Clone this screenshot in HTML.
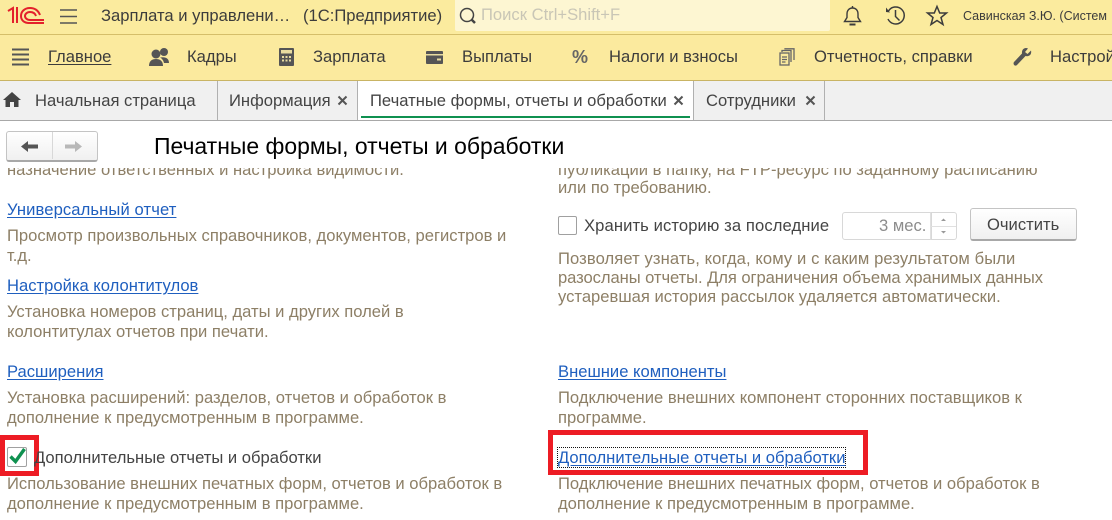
<!DOCTYPE html>
<html lang="ru"><head><meta charset="utf-8"><title>Печатные формы, отчеты и обработки</title>
<style>
html,body{margin:0;padding:0;background:#fff}
#p{position:relative;width:1112px;height:520px;overflow:hidden;background:#fff;font-family:"Liberation Sans",Arial,sans-serif;font-size:16.6px;color:#333}
.a{position:absolute}
.t{position:absolute;white-space:nowrap;line-height:20px}
.g{color:#8d7f66}
.l{color:#1f5fbf;text-decoration:underline;text-underline-offset:2px}
svg{position:absolute;overflow:visible}
.x{position:absolute;width:9px;height:9px}
</style></head><body><div id="p">
<div class="a" style="left:0;top:0;width:1112px;height:34px;background:#fbeb9e;border-bottom:1px solid #d5be6a"></div>
<div class="a" style="left:0;top:35px;width:1112px;height:45px;background:#fbea9e;border-bottom:1px solid #c9b464"></div>
<div class="a" style="left:0;top:81px;width:1112px;height:39px;background:#f0f0f0;border-bottom:1px solid #a8a8a8"></div>

<svg style="left:7px;top:5px" width="36" height="20" viewBox="0 0 36 20" fill="none" stroke="#e3202c" stroke-width="2"><path d="M1 6L6 3V18M10 2V18"/><path d="M33 10C31 5 27 3 23 3C17 3 14 7 14 11C14 15 17 18 22 18" /><path d="M29 11C28 8 26 7 23 7C20 7 18 9 18 11C18 13 20 15 23 15H37"/><path d="M21 18H37"/></svg>
<svg style="left:60px;top:9px" width="18" height="15" fill="none" stroke="#555" stroke-width="1.5"><path d="M0 1H17M0 7.500H17M0 14H17"/></svg>
<div class="t" style="left:101px;top:6px;color:#3c3c3c">Зарплата и управлени…</div>
<div class="t" style="left:303px;top:6px;color:#3c3c3c">(1С:Предприятие)</div>

<div class="a" style="left:455px;top:0;width:375px;height:31px;background:#fdf6d2;border-radius:0 0 2px 2px"></div>
<svg style="left:458px;top:6px" width="20" height="20" fill="none" stroke="#444" stroke-width="1.5"><circle cx="9" cy="9" r="6.500"/><path d="M13.500 13.500L17 17" stroke-width="2.500"/></svg>
<div class="t" style="left:481px;top:5px;color:#c9c6b6">Поиск Ctrl+Shift+F</div>

<svg style="left:843px;top:5px" width="20" height="22" fill="none" stroke="#3c3c3c" stroke-width="1.400"><path d="M1.500 16.500H17.500L15 12.500V9C15 5.500 13 3 9.500 3C6 3 4 5.500 4 9V12.500Z"/><path d="M9.500 3V1"/><path d="M6.500 19.500H12.500" stroke-width="2"/></svg>
<svg style="left:885px;top:5px" width="22" height="22" fill="none" stroke="#3c3c3c" stroke-width="1.500"><path d="M3.500 6A8.500 8.500 0 1 1 3 14"/><path d="M1 4.500L5 9.500L1 9Z" fill="#3c3c3c" stroke="none" transform="translate(0,-2)"/><path d="M10.500 5V11.500L14.500 15.500"/></svg>
<svg style="left:926px;top:5px" width="22" height="22" fill="none" stroke="#3c3c3c" stroke-width="1.500"><path d="M11 1.500L13.700 8H20.500L15 12.500L17 19.500L11 15.500L5 19.500L7 12.500L1.500 8H8.300Z"/></svg>
<div class="t" style="left:963px;top:6px;font-size:12.500px;color:#3c3c3c">Савинская З.Ю. (Систем</div>

<svg style="left:12px;top:48px" width="18" height="18" fill="none" stroke="#555" stroke-width="2"><path d="M0 1.500H17M0 6.500H17M0 11.500H17M0 16.500H17"/></svg>
<div class="t" style="left:48px;top:47px;color:#3c3c3c;text-decoration:underline;text-underline-offset:2px">Главное</div>
<svg style="left:149px;top:47px" width="22" height="20" fill="#555"><circle cx="7" cy="7" r="4.500"/><circle cx="15" cy="5" r="4"/><path d="M0 19C0 14 3 12 7 12C11 12 14 14 14 19Z"/><path d="M11 10.500C16 9.500 20 11 20 16H15C14.500 13.500 13 11.500 11 10.500Z"/></svg>
<div class="t" style="left:187px;top:47px;color:#3c3c3c">Кадры</div>
<svg style="left:279px;top:48px" width="15" height="18"><rect width="15" height="18" rx="1" fill="#555"/><rect x="2" y="2" width="11" height="3.500" fill="#e8dca0"/><path d="M3 8H5V10H3ZM6.500 8H8.500V10H6.500ZM10 8H12V10H10ZM3 11.500H5V13.500H3ZM6.500 11.500H8.500V13.500H6.500ZM10 11.500H12V13.500H10Z" fill="#e8dca0"/></svg>
<div class="t" style="left:313px;top:47px;color:#3c3c3c">Зарплата</div>
<svg style="left:426px;top:51px" width="17" height="13"><rect width="17" height="13" rx="1" fill="#555"/><rect x="0" y="3" width="17" height="1.500" fill="#e8dca0"/><rect x="11" y="7.500" width="4" height="2" fill="#e8dca0"/></svg>
<div class="t" style="left:462px;top:47px;color:#3c3c3c">Выплаты</div>
<div class="t" style="left:572px;top:47px;font-weight:bold;font-size:18px;color:#666">%</div>
<div class="t" style="left:609px;top:47px;color:#3c3c3c">Налоги и взносы</div>
<svg style="left:779px;top:48px" width="16" height="18" fill="none" stroke="#666" stroke-width="1.300"><rect x="1" y="5" width="9" height="12" fill="#fbea9e"/><path d="M3 4V2.500H12V14M6 1.500V0.800H15V12"/><path d="M3 9H8M3 11.500H8M3 14H6.500"/></svg>
<div class="t" style="left:814px;top:47px;color:#3c3c3c">Отчетность, справки</div>
<svg style="left:1013px;top:47px" width="19" height="20" fill="#555"><path d="M18 3.500L14.500 7L12 5L15 1.500C11.500 0 8.500 2.500 9 6.500L1 15C-0.500 17 2 20 4 18L12.500 9C16 10 19 7.500 18 3.500Z"/></svg>
<div class="t" style="left:1050px;top:47px;color:#3c3c3c">Настрой</div>

<svg style="left:3px;top:92px" width="18" height="15" fill="#444"><path d="M9 0L18 8H15.500V15H11V10H7V15H2.500V8H0Z"/></svg>
<div class="t" style="left:35px;top:91px;color:#444">Начальная страница</div>
<div class="a" style="left:217px;top:81px;width:1px;height:39px;background:#b0b0b0"></div>
<div class="t" style="left:229px;top:91px;color:#444">Информация</div>
<svg class="x" style="left:338px;top:96px" viewBox="0 0 9 9" stroke="#555" stroke-width="2"><path d="M0.500 0.500L8.500 8.500M8.500 0.500L0.500 8.500"/></svg>
<div class="a" style="left:357px;top:81px;width:1px;height:39px;background:#b0b0b0"></div>
<div class="a" style="left:358px;top:81px;width:335px;height:39px;background:#fff"></div>
<div class="a" style="left:361px;top:116px;width:329px;height:2px;background:#0f9150"></div>
<div class="t" style="left:370px;top:91px;color:#444">Печатные формы, отчеты и обработки</div>
<svg class="x" style="left:674px;top:96px" viewBox="0 0 9 9" stroke="#555" stroke-width="2"><path d="M0.500 0.500L8.500 8.500M8.500 0.500L0.500 8.500"/></svg>
<div class="a" style="left:693px;top:81px;width:1px;height:39px;background:#b0b0b0"></div>
<div class="t" style="left:706px;top:91px;color:#444">Сотрудники</div>
<svg class="x" style="left:806px;top:96px" viewBox="0 0 9 9" stroke="#555" stroke-width="2"><path d="M0.500 0.500L8.500 8.500M8.500 0.500L0.500 8.500"/></svg>
<div class="a" style="left:824px;top:81px;width:1px;height:39px;background:#b0b0b0"></div>

<div class="a" style="left:6px;top:131px;width:90px;height:28px;border:1px solid #c4c4c4;border-bottom:2px solid #a8a8a8;border-radius:3px;background:linear-gradient(#fff,#f0f0f0)"></div>
<div class="a" style="left:52px;top:132px;width:1px;height:27px;background:#d8d8d8"></div>
<svg style="left:21px;top:140px" width="18" height="13" fill="#555"><path d="M0 6.500L7 1V4.500H17V8.500H7V12Z"/></svg>
<svg style="left:65px;top:140px" width="18" height="13" fill="#b8b8b8"><path d="M17 6.500L10 1V4.500H0V8.500H10V12Z"/></svg>
<div class="t" style="left:154px;top:134px;font-size:22.950px;line-height:24px;color:#000">Печатные формы, отчеты и обработки</div>

<div class="a" style="left:0;top:168px;width:1112px;height:352px;overflow:hidden">
<div class="t g" style="left:7px;top:-8px">назначение ответственных и настройка видимости.</div>
<div class="t g" style="left:558px;top:-8px">публикации в папку, на FTP-ресурс по заданному расписанию</div>
</div>
<div class="t g" style="left:558px;top:178px">или по требованию.</div>

<div class="t l" style="left:7px;top:200px;letter-spacing:.1px">Универсальный отчет</div>
<div class="t g" style="left:7px;top:226px">Просмотр произвольных справочников, документов, регистров и</div>
<div class="t g" style="left:7px;top:246px">т.д.</div>
<div class="t l" style="left:7px;top:276px">Настройка колонтитулов</div>
<div class="t g" style="left:7px;top:302px">Установка номеров страниц, даты и других полей в</div>
<div class="t g" style="left:7px;top:322px">колонтитулах отчетов при печати.</div>
<div class="t l" style="left:7px;top:362px">Расширения</div>
<div class="t g" style="left:7px;top:388px">Установка расширений: разделов, отчетов и обработок в</div>
<div class="t g" style="left:7px;top:408px">дополнение к предусмотренным в программе.</div>

<div class="a" style="left:558px;top:216px;width:17px;height:17px;border:1px solid #a0a0a0;border-radius:2px;background:#fff"></div>
<div class="t" style="left:584px;top:216px;color:#444;letter-spacing:.1px">Хранить историю за последние</div>
<div class="a" style="left:842px;top:212px;width:88px;height:26px;border:1px solid #d8d8d8;border-radius:3px 0 0 3px;background:#fff"></div>
<div class="a" style="left:930px;top:212px;width:25px;height:26px;border:1px solid #d8d8d8;border-left:1px solid #e0e0e0;border-radius:0 3px 3px 0"></div>
<div class="a" style="left:931px;top:226px;width:25px;height:1px;background:#e0e0e0"></div>
<div class="t" style="left:879px;top:216px;color:#8c8c8c">3 мес.</div>
<svg style="left:940px;top:218px" width="7" height="16" fill="#999"><path d="M1 3L3.500 0.500L6 3ZM1 13L3.500 15.500L6 13Z"/></svg>
<div class="a" style="left:970px;top:208px;width:105px;height:30px;border:1px solid #c4c4c4;border-bottom:2px solid #a8a8a8;border-radius:3px;background:linear-gradient(#fff,#f0f0f0)"></div>
<div class="t" style="left:987px;top:215px;color:#444">Очистить</div>
<div class="t g" style="left:558px;top:249px;letter-spacing:.09px">Позволяет узнать, когда, кому и с каким результатом были</div>
<div class="t g" style="left:558px;top:268px;letter-spacing:-.07px">разосланы отчеты. Для ограничения объема хранимых данных</div>
<div class="t g" style="left:558px;top:287px">устаревшая история рассылок удаляется автоматически.</div>
<div class="t l" style="left:558px;top:362px">Внешние компоненты</div>
<div class="t g" style="left:558px;top:388px">Подключение внешних компонент сторонних поставщиков к</div>
<div class="t g" style="left:558px;top:408px">программе.</div>

<div class="a" style="left:7px;top:447px;width:18px;height:18px;border:1px solid #a0a0a0;border-radius:2px;background:#fff"></div>
<svg style="left:9px;top:447px" width="18" height="17" fill="none" stroke="#0f9150" stroke-width="3.400"><path d="M1.500 9.500L6.500 14.500L15.500 2"/></svg>
<div class="a" style="left:0;top:435px;width:39px;height:41px;box-sizing:border-box;border:5px solid #ed1c24"></div>
<div class="t" style="left:34px;top:448px;color:#444">Дополнительные отчеты и обработки</div>
<div class="t g" style="left:7px;top:474px">Использование внешних печатных форм, отчетов и обработок в</div>
<div class="t g" style="left:7px;top:494px">дополнение к предусмотренным в программе.</div>

<div class="a" style="left:548px;top:430px;width:320px;height:45px;box-sizing:border-box;border:5px solid #ed1c24"></div>
<div class="a" style="left:557px;top:447px;width:289px;height:21px;box-sizing:border-box;border:1px dotted #111"></div>
<div class="t l" style="left:558px;top:448px">Дополнительные отчеты и обработки</div>
<div class="t g" style="left:558px;top:474px">Подключение внешних печатных форм, отчетов и обработок в</div>
<div class="t g" style="left:558px;top:494px">дополнение к предусмотренным в программе.</div>
</div></body></html>
